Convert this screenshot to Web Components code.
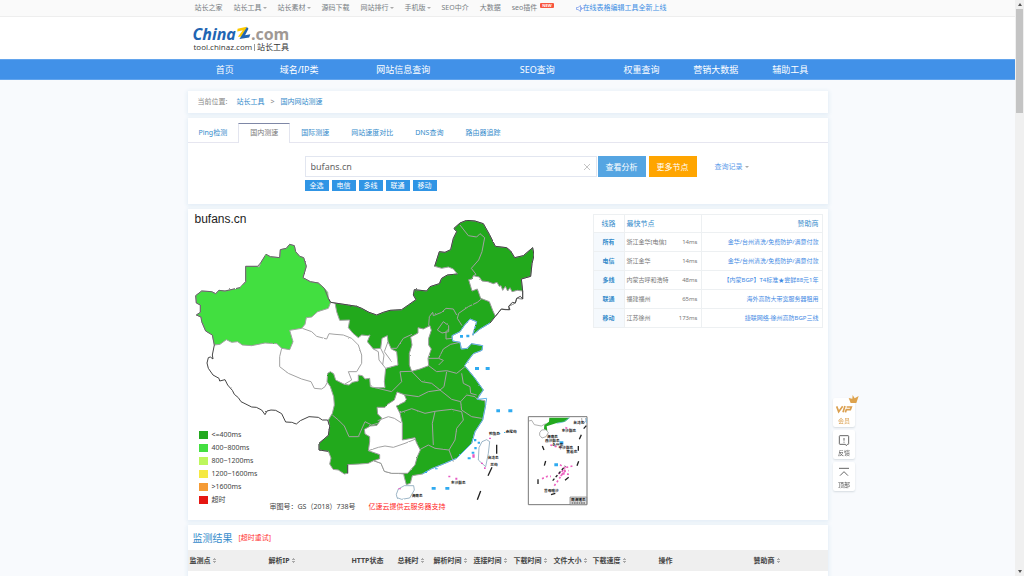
<!DOCTYPE html>
<html lang="zh-CN">
<head>
<meta charset="utf-8">
<title>国内网站测速 - 站长工具</title>
<style>
html,body{margin:0;height:100%}
body{font:7px/10px "Noto Sans","Noto Sans CJK SC",sans-serif;color:#666;background:#f8fafd;overflow:hidden}
.shell{display:grid;grid-template-columns:minmax(0,1fr) 9px;height:100vh}
.page{overflow:hidden;height:100vh}
main{max-width:640px;margin:11px auto 0;display:grid;gap:5px}
</style>
</head>
<body>
<div class="shell">
  <div class="page">
    <zt-topbar></zt-topbar>
    <zt-header></zt-header>
    <zt-nav></zt-nav>
    <main>
      <zt-panel><zt-crumbs></zt-crumbs></zt-panel>
      <zt-panel><zt-tabs></zt-tabs><zt-search></zt-search></zt-panel>
      <zt-panel><zt-overview><zt-map slot="map"></zt-map><zt-nodes slot="nodes"></zt-nodes></zt-overview></zt-panel>
      <zt-panel><zt-results></zt-results></zt-panel>
    </main>
  </div>
  <zt-scroll></zt-scroll>
</div>
<zt-dock></zt-dock>
<script>
const reset = `*{box-sizing:border-box}a{text-decoration:none;color:inherit}button,input{font:inherit;border:0;padding:0;margin:0;background:none;border-radius:0}:host{display:block}`;
function define(name, css, html) {
  customElements.define(name, class extends HTMLElement {
    constructor() {
      super();
      this.attachShadow({ mode: "open" }).innerHTML = `<style>${reset}${css}</style>${html}`;
    }
  });
}

define("zt-panel", `:host{background:#fff;box-shadow:0 1px 4px 1px #e3edf6}`, `<slot></slot>`);

define("zt-topbar", `
:host{background:#fafafa;border-bottom:1px solid #eee;color:#777c82}
nav{display:flex;align-items:center;gap:11px;max-width:640px;height:16px;margin:0 auto;padding-left:7px;white-space:nowrap}
.more{display:flex;align-items:center;gap:1px}
.more::after{content:"";border:2px solid transparent;border-top-color:#aaa;border-bottom:0}
.seo{display:flex;gap:3px}
.new{background:#f8563f;color:#fff;font-size:4px;line-height:5px;height:5px;padding:0 2px;border-radius:1px;font-weight:bold}
.ad{display:flex;align-items:center;color:#3f8fe4;margin-left:11px}
svg{width:7px;height:7px}`, `
<nav>
<a href="#">站长之家</a><a href="#" class="more">站长工具</a><a href="#" class="more">站长素材</a><a href="#">源码下载</a><a href="#" class="more">网站排行</a><a href="#" class="more">手机版</a><a href="#">SEO中介</a><a href="#">大数据</a><a href="#" class="seo">seo插件<span class="new">NEW</span></a>
<a href="#" class="ad"><svg viewBox="0 0 14 14" fill="none" stroke="#6f93ea" stroke-width="1.4"><path d="M1 5h3l5-4v12L4 9H1zM11 4v6M13 6v2"/></svg>在线表格编辑工具全新上线</a>
</nav>`);

define("zt-header", `
:host{background:#fff}
.in{max-width:640px;height:42px;margin:0 auto;padding:8px 0 0 5px}
.brand{display:flex;align-items:center;height:17px;font:bold 16px/16px "Open Sans","Noto Sans",sans-serif;color:#a09994}
i{color:#2165b2}
svg{width:15px;height:14px;margin-bottom:2px}
.sub{display:flex;align-items:center;gap:2px;font-size:8px;line-height:10px;color:#333;padding-left:1px}
.sub span:first-child{font-family:"Open Sans","Noto Sans",sans-serif}
.sub b{width:1px;height:7px;background:#999}`, `
<div class="in"><a href="#" class="brand"><i>China</i><svg viewBox="0 0 48 42"><path fill="#fcc900" d="M5 7 34 1 34 5 18 33 6 33 22 12 4 16z"/><path fill="#2165b2" d="M35 2 40 7 29 28 46 25 42 35 11 40z"/></svg><span>.com</span></a>
<div class="sub"><span>tool.chinaz.com</span><b></b><span>站长工具</span></div></div>`);

define("zt-nav", `
:host{background:#4191e8;border-block:1px solid #63a5ed}
nav{display:grid;grid-template-columns:5fr 5fr 9fr 9fr 5fr 5fr 5fr;max-width:640px;margin:0 auto;text-align:center;color:#fff;font-size:9px;line-height:19px;white-space:nowrap}`, `
<nav><a href="#">首页</a><a href="#">域名/IP类</a><a href="#">网站信息查询</a><a href="#">SEO查询</a><a href="#">权重查询</a><a href="#">营销大数据</a><a href="#">辅助工具</a></nav>`);

define("zt-crumbs", `
nav{display:flex;align-items:center;gap:6px;height:22px;padding-left:10px;color:#888}
a{color:#348bcb}span:first-child{margin-right:3px}`, `
<nav><span>当前位置:</span><a href="#">站长工具</a><span>&gt;</span><a href="#">国内网站测速</a></nav>`);

define("zt-tabs", `
:host{padding-top:5px}
nav{display:flex;height:20px;border-bottom:1px solid #e6e6f0;white-space:nowrap}
a{padding:0 11px;line-height:20px;color:#348bcb}
.on{background:#fff;border:1px solid #e3e5ef;border-top-color:#7e87a6;border-bottom:0;line-height:18px;height:20px;color:#777}`, `
<nav><a href="#">Ping检测</a><a href="#" class="on" aria-current="page">国内测速</a><a href="#">国际测速</a><a href="#">网站速度对比</a><a href="#">DNS查询</a><a href="#">路由器追踪</a></nav>`);

define("zt-search", `
:host{padding:13px 0 13px 117px}
form{display:flex;align-items:center;height:21px}
.box{display:flex;align-items:center;width:292px;height:21px;border:1px solid #e2e6f0}
input{flex:1;min-width:0;padding-left:5px;font-size:9px;line-height:12px;color:#666;outline:0}
.x{width:18px;height:18px;display:grid;place-items:center}
.x svg{width:8px;height:8px}
.go{width:48px;height:21px;background:#55a5e2;color:#fff;font-size:8px;margin-left:1px}
.more{background:#ffa500;margin-left:3px}
.log{color:#5b9bea;margin-left:18px;display:flex;align-items:center;gap:2px}
.log::after{content:"";border:2px solid transparent;border-top-color:#aaa;border-bottom:0}
.tags{display:flex;gap:3px;padding-top:3px;height:14px}
.tags button{width:24px;height:11px;background:#3095e5;color:#fff;line-height:10px}`, `
<form><div class="box"><input value="bufans.cn" aria-label="域名"><button type="button" class="x" aria-label="清空"><svg viewBox="0 0 8 8" stroke="#b5b5b5" stroke-width=".8"><path d="M1 1l6 6M7 1 1 7"/></svg></button></div><button type="button" class="go">查看分析</button><button type="button" class="go more">更多节点</button><a href="#" class="log">查询记录</a></form>
<div class="tags"><button>全选</button><button>电信</button><button>多线</button><button>联通</button><button>移动</button></div>`);

define("zt-overview", `
:host{display:grid;grid-template-columns:400fr 230fr;gap:5px;padding-right:5px;align-items:start}
::slotted([slot=nodes]){margin-top:5px}`, `<slot name="map"></slot><slot name="nodes"></slot>`);

define("zt-map", `
:host{position:relative;color:#444}
h2{position:absolute;left:7px;top:3px;margin:0;font:12px/14px "Liberation Sans",sans-serif;color:#222}
svg{display:block;width:100%;height:auto}
ul{position:absolute;left:11px;bottom:14px;margin:0;padding:0;list-style:none}
li{display:flex;align-items:center;gap:4px;height:13px}
li::before{content:"";width:9px;height:8px;background:var(--c)}
p{position:absolute;left:82px;bottom:8px;margin:0;display:flex;gap:13px;white-space:nowrap}
p a{color:#f22}
text{font:bold 11px "Noto Sans CJK SC",sans-serif;fill:#222}
.b{fill:none;stroke:#a2a2a2;stroke-width:3}
.k{fill:none;stroke:#444;stroke-width:3}
.s{fill:none;stroke:#62b3e8;stroke-width:3}
.d{fill:none;stroke:#222;stroke-width:4}`, `
<svg viewBox="9 12 1200 933" role="img" aria-label="测速地图">
<defs><filter id="rough" x="0" y="0" width="100%" height="100%"><feTurbulence type="fractalNoise" baseFrequency=".28" numOctaves="2" seed="4"/><feDisplacementMap in="SourceGraphic" scale="5" xChannelSelector="R" yChannelSelector="G"/></filter></defs>
<g filter="url(#rough)" stroke-linejoin="round">
<path fill="#43df40" stroke="#a2a2a2" stroke-width="3" d="M32 272 50 258 80 260 92 266 102 256 120 258 165 248 182 230 182 184 218 184 222 186 228 172 243 148 256 155 284 158 286 134 304 130 314 118 328 122 332 140 344 154 356 158 364 184 354 218 376 230 400 234 418 250 428 262 430 280 437 292 430 310 398 320 380 336 364 338 360 358 350 370 314 376 324 410 314 434 290 430 276 416 240 414 200 422 172 420 158 410 140 412 124 404 105 418 88 420 82 390 62 378 50 350 48 336 34 330 46 322 46 300 34 294Z"/>
<path fill="#23a91f" stroke="#a2a2a2" stroke-width="3" d="M450 294 490 300 515 304 530 310 552 322 575 330 595 322 615 316 650 314 670 300 693 284 685 270 688 254 725 258 735 245 763 236 770 220 787 210 817 207 805 192 790 186 770 190 749 184 763 140 780 142 797 134 805 100 815 80 807 70 825 54 845 46 870 48 895 56 913 88 931 124 965 128 977 138 989 158 1015 152 1043 128 1047 150 1041 176 1037 214 1009 222 1013 258 1013 282 995 280 991 294 971 304 971 314 949 312 931 334 915 354 885 372 863 390 875 350 855 342 839 360 825 380 801 392 803 408 825 412 829 432 847 430 859 416 893 422 891 436 865 446 850 465 839 482 870 520 895 555 883 570 877 583 900 587 901 605 893 645 870 680 860 715 815 760 775 777 740 791 712 807 682 812 676 835 664 839 658 817 656 807 640 805 620 805 598 799 588 775 566 767 550 775 524 777 488 779 488 805 478 807 460 795 444 793 434 777 438 759 430 739 402 735 402 715 430 691 434 665 430 645 442 625 448 600 446 575 436 545 426 530 428 505 436 500 446 506 452 525 478 538 492 540 502 532 520 528 520 510 532 512 540 522 554 520 556 545 570 548 600 548 598 530 602 490 639 480 635 440 619 432 609 410 607 392 591 400 587 430 565 432 547 410 555 390 548 392 530 390 520 398 504 385 490 368 494 345 464 346 455 320Z"/>
<path fill="#fff" stroke="#999" stroke-width="3" d="M1013 258 997 256 981 260 975 248 968 258 961 244 953 256 948 242 943 244 936 232 925 236 909 230 891 228 883 216 865 212 861 222 851 224 861 258 877 252 887 280 913 290 923 316 931 334 949 312 971 314 971 304 991 294 995 280 1013 282Z"/>
<path fill="#fff" stroke="#999" stroke-width="3" d="M699 368 715 372 735 362 739 376 731 400 731 420 739 432 729 460 731 482 705 492 680 499 673 480 673 445 681 420 677 396 699 384Z"/>
<path fill="#fff" stroke="#999" stroke-width="3" d="M636 561 658 569 664 583 660 590 634 603 645 625 652 655 652 705 690 698 694 712 706 735 697 755 690 780 668 805 640 805 620 805 598 799 588 775 566 767 584 761 584 749 550 737 554 710 554 695 540 687 538 673 556 663 576 661 590 639 578 627 576 607 600 607 606 599 628 585Z"/>
<path class="b" d="M437 292 450 294M352 370 380 380 395 394 425 402 432 386 450 388 475 390 500 400 520 420 530 450 530 475 515 500 490 500 500 525 478 538M290 430 284 455 284 485 310 505 350 522 378 530 388 550 410 552 420 545 428 530M565 432 580 440 582 465 602 490M587 430 597 450 593 480M609 410 598 440 620 470"/>
<path class="b" d="M825 60 850 92 875 96 885 86 899 98 891 140 881 165 859 190 873 208 865 212M891 280 877 292 850 305 821 325 817 340 831 362M731 362 733 335 743 322 745 332 770 322 783 310 805 312 815 330M757 375 775 350 791 362 791 380 771 384ZM791 372 783 380 783 402 801 400M825 412 797 418 775 432 761 460 729 460M761 460 775 466 761 480M619 430 635 430 655 400 681 388"/>
<path class="b" d="M731 482 755 500 785 497 815 505 840 485M830 505 835 535 855 545 857 565 875 570M785 500 777 545 765 555 800 583 827 590 845 570 870 575 877 583M827 590 830 615 860 635 890 640M765 617 800 613 830 620 835 645 815 670 810 705 792 735 805 770M442 630 460 645 478 663 492 695 520 695 540 650 560 660 578 655M570 548 620 560 650 530 645 500 680 499M645 623 680 611 720 625 750 619 765 617M658 569 700 575 730 560 765 555M680 499 710 530 740 535 765 555M750 620 742 655 745 720M706 733 730 720 750 730 792 735M550 737 580 727 600 723 625 727 660 715 690 703M578 647 610 635 628 640 648 653"/>
<path class="k" d="M430 280 437 292 450 294 490 300 515 304 530 310 552 322 575 330 595 322 615 316 650 314 670 300 693 284 685 270 688 254 725 258 735 245 763 236 770 220 787 210 817 207M749 184 763 140 780 142 797 134 805 100 815 80 807 70 825 54 845 46 870 48 895 56 913 88 931 124 965 128 977 138 989 158 1015 152 1043 128 1047 150 1041 176 1037 214 1009 222 1013 258 1013 282 1006 274 995 280 991 294 982 292 971 304 975 314 960 314 949 312 931 334 915 354M88 420 82 450 84 462 76 456 70 458 66 474 70 490 84 510 102 520 104 528 120 524 128 540 142 556 148 568 160 578 168 590 180 596 200 606 214 607 230 615 240 629 246 618 258 615 272 616 290 626 302 651 320 652 334 657 346 647 372 635 400 637 412 645 428 645 434 665 430 691 402 715 402 735 430 739M488 779 488 805"/>
<path fill="none" stroke="#666" stroke-width="3" d="M88 420 82 390 62 378 50 350 48 336 34 330 46 322 46 300 34 294 32 272 50 258 80 260 92 266 102 256 120 258 165 248 182 230 182 184 218 184 228 172 243 148 256 155 284 158 286 134 304 130 314 118 328 122 332 140 344 154 356 158 364 184 354 218 376 230 400 234 418 250 430 280"/>
<path class="s" d="M915 354 885 372 863 390 875 350 855 342 839 360 825 380 801 392 803 408 825 412 829 432 847 430 859 416 893 422 891 436 865 446 839 482 870 520 895 555 877 583 905 580 901 605 893 645 870 680 860 715 815 760 775 777 740 791 712 807"/>
<path fill="#fff" stroke="#6b91aa" stroke-width="2" d="M882 728 891 710 905 704 914 710 910 745 902 785 880 765ZM634 868 640 852 658 842 686 842 688 855 674 879 650 883 636 878Z"/>
</g>
<g fill="#2faaf0"><path d="M825 390h9v8h-9zM844 389h9v8h-9zM870 486h12v9h-12zM902 486h12v9h-12zM934 613h11v9h-11zM970 613h12v9h-12zM867 702h7v7h-7zM878 710h7v6h-7zM868 726h7v7h-7zM860 740h8v6h-8zM848 757h9v6h-9zM740 846h12v8h-12zM781 846h12v8h-12zM720 800h6v4h-6zM750 790h8v3h-8zM942 684h4v3h-4zM957 681h4v3h-4z"/></g>
<g fill="#e65ac4"><path d="M912 698h6v4h-6zM862 748h7v10h-7zM897 787h5v5h-5zM790 812h6v5h-6zM811 818h6v6h-6zM888 773h6v4h-6zM640 850h8v3h-8z"/></g>
<path class="d" d="M935 719v27M921 787 909 812M887 858 877 884"/>
<text x="912" y="690">钓鱼岛</text><text x="962" y="684">赤尾屿</text><text x="908" y="761">台湾岛</text><text x="916" y="784">兰屿</text><text x="798" y="836">东沙群岛</text><text x="680" y="876">海南岛</text>
<g transform="translate(765 405)">
<path fill="#fff" stroke="#777" stroke-width="3" d="M265 230H441V494H265z"/>
<path fill="#23a91f" d="M328 233H389L375 245 350 249 320 259 322 272 312 267 313 255 327 245z"/>
<path fill="none" stroke="#888" stroke-width="2" d="M266 243 275 241 283 254 304 258 317 251M299 278 305 270 318 269 325 278 318 290 306 294 299 286zM425 234 426 247 431 250 438 242 437 234"/>
<path fill="none" stroke="#62b3e8" stroke-width="2" d="M389 233 370 246 350 250M439 235v14"/>
<path class="d" d="M439 257 431 266M424 284 418 298M415 318v14M416 364 411 377M386 412 375 421M346 460 333 464M294 418v14M317 363 313 377M307 318 312 330"/>
<path fill="#2faaf0" d="M359 304h11v9h-11zM343 370h11v9h-11z"/>
<path fill="none" stroke="#ec62c0" stroke-width="5" stroke-dasharray="6 7" d="M376 263 390 267M331 315 350 320 366 323M306 416 322 409 333 409M343 437 351 426 363 408 380 382 402 377M360 374 374 384 365 396 386 392M355 400 390 403M362 408 373 397"/>
<path class="d" stroke-dasharray="8 6" d="M338 422 350 408 362 394 376 378"/>
<text x="400" y="251">台湾岛</text><text x="321" y="294">海南岛</text><text x="365" y="276">东沙群岛</text><text x="315" y="306">西沙群岛</text><text x="337" y="317">永兴岛</text><text x="356" y="328">中沙群岛</text><text x="379" y="338">黄岩岛</text><text x="312" y="457">曾母暗沙</text>
<path fill="#ddd" stroke="#777" stroke-width="2" d="M390 471H440V494H390z"/><text x="393" y="484">南海诸岛</text>
<path stroke="#444" stroke-width="3" stroke-dasharray="5 2" d="M395 489H437"/>
</g>
</svg>
<h2>bufans.cn</h2>
<ul><li style="--c:#23a91f">&lt;=400ms</li><li style="--c:#43df40">400~800ms</li><li style="--c:#bdf75c">800~1200ms</li><li style="--c:#f5e942">1200~1600ms</li><li style="--c:#f59b35">&gt;1600ms</li><li style="--c:#e51712">超时</li></ul>
<p><span>审图号：GS（2018）738号</span><a href="#">亿速云提供云服务器支持</a></p>`);

define("zt-nodes", `
table{width:100%;table-layout:fixed;border-collapse:collapse;border:1px solid #edf0f2;font-size:6px;line-height:9px;white-space:nowrap}
th,td{height:19px;padding:0 3px 0 2px;font-weight:normal;border-bottom:1px solid #edf0f2;text-align:left}
thead th{font-size:7px;height:18px}
th{color:#348bcb}th:first-child{text-align:center;border-right:1px solid #edf0f2;padding:0}
tbody th{background:#f5f9fd;font-size:6px;font-weight:bold}
td:nth-child(3){text-align:right;padding-left:0}
thead th:last-child,td:last-child{text-align:right;border-left:1px solid #edf0f2}
td{color:#777}td a{color:#3f8ae4}
.a{width:31px}.b{width:49px}.c{width:28px}`, `
<table><colgroup><col class="a"><col class="b"><col class="c"><col></colgroup>
<thead><tr><th>线路</th><th colspan="2">最快节点</th><th>赞助商</th></tr></thead><tbody>
<tr><th>所有</th><td>浙江金华[电信]</td><td>14ms</td><td><a href="#">金华/台州清洗/免费防护/满意付款</a></td></tr>
<tr><th>电信</th><td>浙江金华</td><td>14ms</td><td><a href="#">金华/台州清洗/免费防护/满意付款</a></td></tr>
<tr><th>多线</th><td>内蒙古呼和浩特</td><td>48ms</td><td><a href="#">【内蒙BGP】T4标准★尝鲜88元1年</a></td></tr>
<tr><th>联通</th><td>福建福州</td><td>65ms</td><td><a href="#">海外高防大带宽服务器租用</a></td></tr>
<tr><th>移动</th><td>江苏徐州</td><td>173ms</td><td><a href="#">捷联网络-徐州高防BGP三线</a></td></tr>
</tbody></table>`);

define("zt-results", `
:host{min-height:90px}
header{display:flex;align-items:center;gap:6px;height:25px;padding-left:5px}
h2{margin:0;font-size:10px;line-height:14px;font-weight:normal;color:#348bcb}
header a{color:#f33}
table{width:100%;table-layout:fixed;border-collapse:collapse;white-space:nowrap}
th{height:21px;padding:0 0 0 2px;background:#efefef;text-align:left;color:#444;font-weight:bold}
.s::after{content:"";display:inline-block;width:3px;height:5px;margin-left:2px;background:conic-gradient(from 135deg at 50% 0,#aaa 90deg,transparent 0) top/3px 2px no-repeat,conic-gradient(from -45deg at 50% 100%,#aaa 90deg,transparent 0) bottom/3px 2px no-repeat}`, `
<header><h2>监测结果</h2><a href="#">[超时重试]</a></header>
<table><colgroup>${[79,83,46,36,40,40,40,39,66,95,76].map(w => `<col style="width:${w}px">`).join("")}</colgroup>
<thead><tr><th class="s">监测点</th><th class="s">解析IP</th><th>HTTP状态</th><th class="s">总耗时</th><th class="s">解析时间</th><th class="s">连接时间</th><th class="s">下载时间</th><th class="s">文件大小</th><th class="s">下载速度</th><th>操作</th><th class="s">赞助商</th></tr></thead></table>`);

define("zt-dock", `
:host{position:fixed;left:calc(50% + 321px);bottom:85px;width:22px;display:grid;gap:3px;text-align:center;font-size:6px;line-height:8px;color:#555}
a{display:flex;flex-direction:column;align-items:center;justify-content:space-between;height:29px;padding:5px 0 2px;background:#fff;border-radius:2px;box-shadow:0 1px 2px #d5dbe0;position:relative}
svg{width:16px;height:12px;overflow:visible}
.v{color:#dba050}.v .crown{position:absolute;right:-4px;top:-4px;width:11px;height:11px}`, `
<a href="#" class="v"><svg class="crown" viewBox="0 0 33 33"><path fill="#dda24d" d="M2 12 13 14 14 3 20 13 32 6 25 27 8 27z"/></svg><svg viewBox="0 0 48 36" fill="none" stroke="#dba050" stroke-width="5"><path d="M2 10 8 26 20 10M27 9 21 28M32 12H46L43 20H31L28 28"/></svg>会员</a>
<a href="#"><svg viewBox="0 0 48 36" fill="none" stroke="#666" stroke-width="3"><path d="M12 2H36Q38 2 38 4V26Q38 28 36 28H34L31 32 28 28H12Q10 28 10 26V4Q10 2 12 2zM24 9V17M24 20V23"/></svg>反馈</a>
<a href="#"><svg viewBox="0 0 48 36" fill="none" stroke="#666" stroke-width="3"><path d="M9 4H39M12 26 24 14 36 26"/></svg>顶部</a>`);

define("zt-scroll", `
:host{background:#f0f0f0;display:flex;flex-direction:column;justify-content:space-between;align-items:center;padding:3px 0}
i{border:2px solid transparent;border-top:3px solid #555;border-bottom:0}
.u{transform:rotate(180deg)}
b{width:7px;height:18vh;background:#c4c4c4;margin-bottom:auto;margin-top:3px}`, `<i class="u"></i><b></b><i></i>`);
</script>
</body>
</html>
